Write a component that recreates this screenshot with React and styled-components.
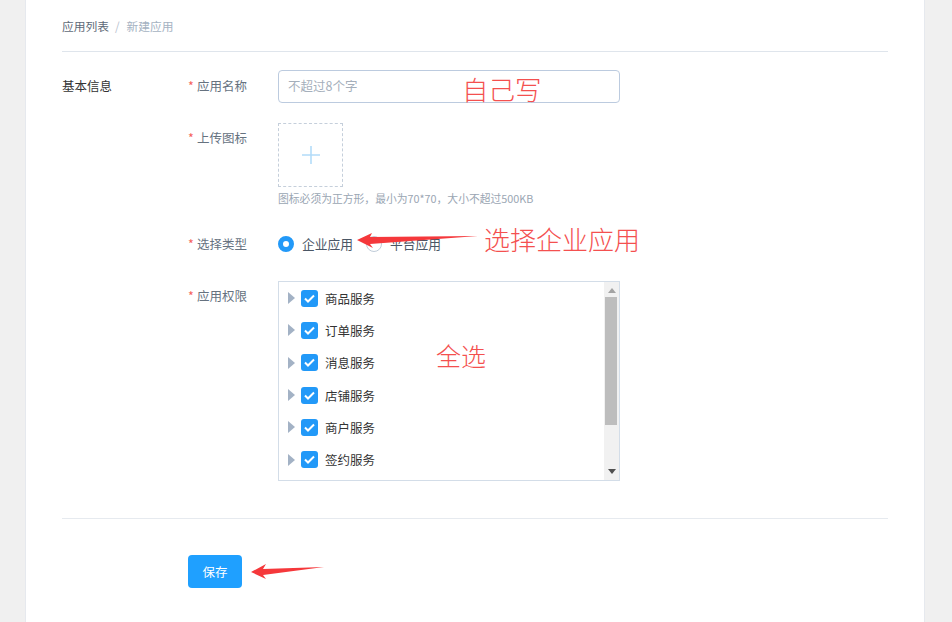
import React from 'react';
import styled, { createGlobalStyle } from 'styled-components';

const permissions = ['商品服务', '订单服务', '消息服务', '店铺服务', '商户服务', '签约服务'];

const App = () => (
  <>
    <GlobalStyle />
    <Card>
      <Breadcrumb>
        <Crumb>应用列表</Crumb>
        <CrumbSeparator>/</CrumbSeparator>
        <Crumb $current>新建应用</Crumb>
      </Breadcrumb>

      <FormSection>
        <SectionTitle>基本信息</SectionTitle>
        <Fields>
          <FormRow>
            <FieldLabel><Star>*</Star>应用名称</FieldLabel>
            <TextInput placeholder="不超过8个字" />
          </FormRow>

          <FormRow>
            <FieldLabel $tight><Star>*</Star>上传图标</FieldLabel>
            <div>
              <UploadBox>
                <svg width="18" height="18" viewBox="0 0 18 18">
                  <path d="M9 0v18M0 9h18" stroke="#b3dcf9" strokeWidth="1.6" fill="none" />
                </svg>
              </UploadBox>
              <Hint>图标必须为正方形，最小为70*70，大小不超过500KB</Hint>
            </div>
          </FormRow>

          <FormRow $center $offset={9}>
            <FieldLabel $flat><Star>*</Star>选择类型</FieldLabel>
            <RadioGroup>
              <RadioItem><RadioDot $checked />企业应用</RadioItem>
              <RadioItem><RadioDot />平台应用</RadioItem>
            </RadioGroup>
          </FormRow>

          <FormRow $offset={8}>
            <FieldLabel $tight><Star>*</Star>应用权限</FieldLabel>
            <TreeBox>
              <TreeList>
                {permissions.map((name) => (
                  <TreeRow key={name}>
                    <Caret />
                    <CheckBox>
                      <svg width="11" height="9" viewBox="0 0 11 9">
                        <path d="M1 4.5l3 3 6-6" stroke="#fff" strokeWidth="2" fill="none" />
                      </svg>
                    </CheckBox>
                    {name}
                  </TreeRow>
                ))}
              </TreeList>
              <ScrollBar>
                <ScrollArrow />
                <ScrollTrack><ScrollThumb /></ScrollTrack>
                <ScrollArrow $down />
              </ScrollBar>
            </TreeBox>
          </FormRow>
        </Fields>
      </FormSection>

      <Footer>
        <SaveButton type="button">保存</SaveButton>
      </Footer>

      {/* 截图上的红色标注 */}
      <Note $left={436} $top={71} $size={26.5}>自己写</Note>
      <Note $left={458} $top={221} $size={26}>选择企业应用</Note>
      <Note $left={410} $top={337} $size={25}>全选</Note>
      <ArrowMark $left={331} $top={230} width="125" height="22" viewBox="0 0 125 22">
        <polygon points="0,10 15,3 13,7 121,6 13,14 16,18" fill="#f5383b" />
      </ArrowMark>
      <ArrowMark $left={225} $top={562} width="75" height="20" viewBox="0 0 75 20">
        <polygon points="0,10 15,2 12,7 73,5 12,13 15,17" fill="#f5383b" />
      </ArrowMark>
    </Card>
  </>
);

const GlobalStyle = createGlobalStyle`
  html, body {
    margin: 0;
    height: 100%;
    overflow: hidden;
    background: #f0f0f0;
  }
  body {
    font-family: "Noto Sans CJK SC", "Liberation Sans", sans-serif;
  }
  * {
    box-sizing: border-box;
  }
`;

const Card = styled.div`
  position: relative;
  width: 900px;
  height: 622px;
  margin-left: 25px;
  padding: 0 36px;
  background: #fff;
  border-left: 1px solid #e6e9ee;
  border-right: 1px solid #e6e9ee;
`;

const Breadcrumb = styled.div`
  display: flex;
  align-items: center;
  height: 52px;
  border-bottom: 1px solid #dfe5ec;
  font-size: 11.75px;
`;

const Crumb = styled.span`
  color: ${(p) => (p.$current ? '#a5b2c2' : '#5e6a78')};
`;

const CrumbSeparator = styled.span`
  margin: 0 7px 0 6px;
  color: #b9c3cf;
`;

const FormSection = styled.div`
  display: flex;
  padding-top: 18px;
`;

const SectionTitle = styled.div`
  width: 126px;
  font-size: 12.5px;
  line-height: 32px;
  color: #333;
`;

const Fields = styled.div`
  display: flex;
  flex-direction: column;
  gap: 20px;
`;

const FormRow = styled.div`
  display: flex;
  align-items: ${(p) => (p.$center ? 'center' : 'flex-start')};
  margin-top: ${(p) => p.$offset || 0}px;
`;

const FieldLabel = styled.div`
  width: 90px;
  font-size: 12.5px;
  line-height: ${(p) => (p.$tight ? '30px' : p.$flat ? '18px' : '32px')};
  color: #66727f;
`;

const Star = styled.span`
  display: inline-block;
  width: 9px;
  color: #f5605c;
`;

const TextInput = styled.input`
  width: 342px;
  height: 33px;
  padding: 0 9px 2px;
  border: 1px solid #bccbdf;
  border-radius: 4px;
  outline: none;
  font-family: inherit;
  font-size: 12.5px;

  &::placeholder {
    color: #a5afbb;
    opacity: 1;
  }
`;

const UploadBox = styled.div`
  display: flex;
  align-items: center;
  justify-content: center;
  width: 65px;
  height: 64px;
  border: 1px dashed #c5cfdb;
`;

const Hint = styled.div`
  margin-top: 3px;
  font-size: 10.8px;
  line-height: 16px;
  color: #9aa6b3;
`;

const RadioGroup = styled.div`
  display: flex;
  gap: 13px;
`;

const RadioItem = styled.label`
  display: flex;
  align-items: center;
  gap: 8px;
  font-size: 12.75px;
  line-height: 18px;
  color: #4a5665;
`;

const RadioDot = styled.span`
  width: 16px;
  height: 16px;
  border-radius: 50%;
  border: ${(p) => (p.$checked ? '5px solid #2299f8' : '1px solid #c0ccd9')};
  background: #fff;
`;

const TreeBox = styled.div`
  display: flex;
  width: 342px;
  height: 200px;
  border: 1px solid #d3dde8;
`;

const TreeList = styled.div`
  flex: 1;
  overflow: hidden;
`;

const TreeRow = styled.div`
  display: flex;
  align-items: center;
  height: 32.3px;
  padding-left: 9px;
  font-size: 12.5px;
  color: #333;
`;

const Caret = styled.span`
  width: 0;
  height: 0;
  margin-right: 6px;
  border-left: 7px solid #a3b2c5;
  border-top: 6px solid transparent;
  border-bottom: 6px solid transparent;
`;

const CheckBox = styled.span`
  display: flex;
  align-items: center;
  justify-content: center;
  width: 17px;
  height: 17px;
  margin-right: 7px;
  border-radius: 3px;
  background: #2299f8;
`;

const ScrollBar = styled.div`
  display: flex;
  flex-direction: column;
  width: 15px;
  background: #f1f1f1;
`;

const ScrollArrow = styled.span`
  align-self: center;
  flex: none;
  width: 0;
  height: 0;
  margin: ${(p) => (p.$down ? '5px 0 6px' : '6px 0 4px')};
  border-left: 4px solid transparent;
  border-right: 4px solid transparent;
  ${(p) => (p.$down ? 'border-top: 5px solid #505050;' : 'border-bottom: 5px solid #a3a3a3;')}
`;

const ScrollTrack = styled.div`
  flex: 1;
  padding: 0 2px 0 1px;
`;

const ScrollThumb = styled.div`
  height: 128px;
  background: #bdbdbd;
`;

const Footer = styled.div`
  margin-top: 37px;
  padding: 36px 0 0 126px;
  border-top: 1px solid #e6eaef;
`;

const SaveButton = styled.button`
  width: 54px;
  height: 33px;
  border: none;
  border-radius: 4px;
  background: #1fa0ff;
  color: #fff;
  font-family: inherit;
  font-size: 12.5px;
`;

const Note = styled.div`
  position: absolute;
  left: ${(p) => p.$left}px;
  top: ${(p) => p.$top}px;
  font-size: ${(p) => p.$size}px;
  font-weight: 300;
  line-height: 36px;
  color: #f4504f;
  white-space: nowrap;
`;

const ArrowMark = styled.svg`
  position: absolute;
  left: ${(p) => p.$left}px;
  top: ${(p) => p.$top}px;
`;

export default App;
